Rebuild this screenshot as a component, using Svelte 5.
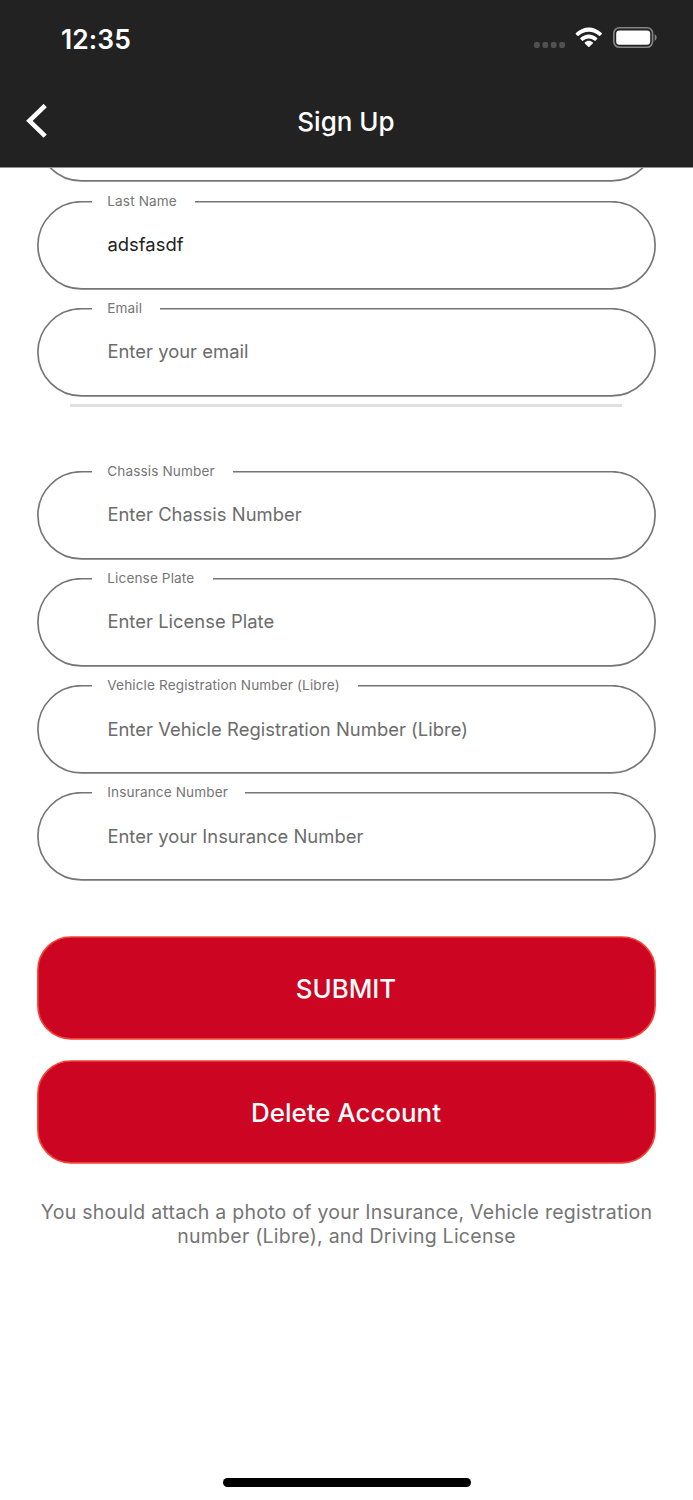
<script>
    let fields = $state([
        { label: "Last Name", hint: "Enter your last name", value: "adsfasdf", gap: 103.3 },
        { label: "Email", hint: "Enter your email", value: "", gap: 68.5 },
    ]);
    let vehicleFields = $state([
        { label: "Chassis Number", hint: "Enter Chassis Number", value: "", gap: 141.3 },
        { label: "License Plate", hint: "Enter License Plate", value: "", gap: 121 },
        { label: "Vehicle Registration Number (Libre)", hint: "Enter Vehicle Registration Number (Libre)", value: "", gap: 266.6 },
        { label: "Insurance Number", hint: "Enter your Insurance Number", value: "", gap: 153.7 },
    ]);
    const buttons = ["SUBMIT", "Delete Account"];
</script>

{#snippet outline()}
    <svg class="outline" viewBox="0 0 619 89">
        <rect x="0.9" y="0.7" width="617.2" height="87.2" rx="43.6" />
    </svg>
{/snippet}

{#snippet field(item)}
    <label class="field">
        {@render outline()}
        <span class="label" style:width="{item.gap}px">{item.label}</span>
        <input placeholder={item.hint} bind:value={item.value}>
    </label>
{/snippet}

<div class="screen">
    <header>
        <div class="status">
            <span class="time">12:35</span>
            <svg class="dots" width="31" height="6" viewBox="0 0 31 6">
                {#each [0, 8.4, 16.8, 25.2] as x}
                    <rect {x} y="0" width="5.8" height="6" rx="2" />
                {/each}
            </svg>
            <svg class="wifi" width="28" height="21" viewBox="0 0 28 21">
                <path d="M0.9 6C8.3 -1.5 19.3 -1.5 26.7 6Q27.2 6.6 26.7 7.2L25.1 8.8Q24.6 9.2 24 8.7C18 3.3 9.6 3.3 3.6 8.7Q3 9.2 2.5 8.8L0.9 7.2Q0.4 6.6 0.9 6Z" />
                <path d="M5.4 11C10.2 6.3 17.4 6.3 22.2 11Q22.6 11.5 22.2 12L20.4 13.7Q19.9 14.1 19.3 13.6C16.1 10.8 11.5 10.8 8.3 13.6Q7.7 14.1 7.2 13.7L5.4 12Q5 11.5 5.4 11Z" />
                <path d="M9.9 15.3C12.2 13.2 15.4 13.2 17.7 15.3Q18.2 15.9 17.7 16.5L14.4 19.8Q13.8 20.3 13.2 19.8L9.9 16.5Q9.4 15.9 9.9 15.3Z" />
            </svg>
            <svg class="battery" width="45" height="22" viewBox="0 0 45 22">
                <rect class="shell" x="0.8" y="0.8" width="38.8" height="19.4" rx="5.6" />
                <rect x="3.2" y="3.4" width="34" height="14.4" rx="3.3" />
                <path class="tip" d="M41.7 7.2C44.3 8.3 44.3 12.7 41.7 13.8Z" />
            </svg>
        </div>
        <div class="bar">
            <svg class="back" width="22" height="34" viewBox="0 0 22 34">
                <path d="M19.2 1.5L3.4 16.8L19.2 32.2" />
            </svg>
            <h1>Sign Up</h1>
        </div>
    </header>

    <main>
        <div class="group">
            <!-- scrolled under the header, only its bottom edge shows -->
            <div class="field">
                {@render outline()}
            </div>
            {#each fields as item}
                {@render field(item)}
            {/each}
        </div>
        <hr>
        <div class="group">
            {#each vehicleFields as item}
                {@render field(item)}
            {/each}
        </div>
        <div class="buttons">
            {#each buttons as text}
                <button>
                    <svg class="outline" viewBox="0 0 619 104">
                        <rect x="0.9" y="1" width="617.2" height="101.8" rx="33" />
                    </svg>
                    <span>{text}</span>
                </button>
            {/each}
        </div>
        <p>You should attach a photo of your Insurance, Vehicle registration<br>number (Libre), and Driving License</p>
    </main>

    <div class="home"></div>
</div>

<style>
    :global(body) {
        background: #fff;
    }
    .screen {
        width: 693px;
        height: 1500px;
        display: flex;
        flex-direction: column;
        overflow: hidden;
        background: #fff;
        font-family: Inter, "Liberation Sans", sans-serif;
    }
    header {
        flex: none;
        height: 168px;
        box-sizing: border-box;
        background: #222;
        border-bottom: 1px solid #909090;
        color: #fff;
    }
    .status {
        display: flex;
        align-items: flex-start;
        height: 76px;
        padding: 0 35px 0 61px;
        box-sizing: border-box;
    }
    .time {
        flex: 1;
        font-size: 26.4px;
        font-weight: 600;
        line-height: 32px;
        margin-top: 23px;
        letter-spacing: 0.1px;
    }
    .status svg {
        fill: #fff;
    }
    .status .dots {
        margin: 42px 10px 0 0;
        fill: #515151;
    }
    .wifi {
        margin: 27px 10px 0 0;
    }
    .battery {
        margin-top: 27px;
    }
    .battery .shell {
        fill: none;
        stroke: #858585;
        stroke-width: 1.6;
    }
    .battery .tip {
        fill: #858585;
    }
    .bar {
        display: grid;
        grid-template-columns: 60px 1fr 60px;
        align-items: center;
        height: 90px;
    }
    .back {
        margin-left: 26px;
        fill: none;
        stroke: #fff;
        stroke-width: 4.6;
    }
    h1 {
        margin: 1px 1px 0 0;
        text-align: center;
        font-size: 26px;
        font-weight: 500;
    }
    main {
        flex: 1;
        overflow: hidden;
        padding: 0 37px;
    }
    .group {
        display: flex;
        flex-direction: column;
        gap: 18.2px;
    }
    .group:first-child {
        margin-top: -74.6px;
    }
    .field {
        position: relative;
        display: block;
        height: 89px;
    }
    .outline {
        position: absolute;
        inset: 0;
        width: 100%;
        height: 100%;
        fill: none;
        stroke: #757575;
        stroke-width: 1.67;
    }
    .label {
        position: absolute;
        top: -9px;
        left: 54.7px;
        padding-left: 15.6px;
        box-sizing: border-box;
        background: #fff;
        color: #757575;
        font-size: 13.6px;
        line-height: 18px;
        letter-spacing: 0.12px;
        white-space: nowrap;
    }
    input {
        position: relative;
        width: 100%;
        height: 100%;
        padding: 0 70px 2px 70.4px;
        box-sizing: border-box;
        border: 0;
        outline: 0;
        background: none;
        color: #222;
        font-family: inherit;
        font-size: 18.4px;
        letter-spacing: 0.03px;
    }
    input::placeholder {
        color: #6c6c6c;
        opacity: 1;
    }
    hr {
        height: 3px;
        margin: 7.6px 34px 63.3px 33px;
        border: 0;
        background: #e0e0e0;
    }
    .buttons {
        display: flex;
        flex-direction: column;
        gap: 19.7px;
        margin-top: 55px;
    }
    button {
        position: relative;
        height: 104px;
        padding: 1px 1px 0 0;
        border: 0;
        background: none;
        color: #fff;
        font-family: inherit;
        font-size: 25.9px;
        font-weight: 500;
    }
    button .outline {
        fill: #cc0522;
        stroke: #f44336;
    }
    button span {
        position: relative;
    }
    p {
        margin: 36px -20px 0;
        color: #757575;
        font-size: 19.5px;
        line-height: 24px;
        letter-spacing: 0.25px;
        text-align: center;
    }
    .home {
        flex: none;
        width: 248px;
        height: 8.5px;
        margin: 0 auto 13.5px;
        border-radius: 5px;
        background: #000;
    }
</style>
